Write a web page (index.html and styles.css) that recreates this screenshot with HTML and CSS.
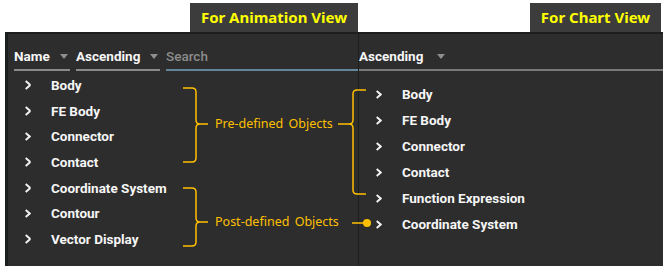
FILE: index.html
```html
<!DOCTYPE html>
<html lang="en">
  <head>
    <meta charset="UTF-8" />
    <meta name="viewport" content="width=device-width, initial-scale=1.0" />
    <link rel="stylesheet" href="styles.css">
    <title>Object Tree Views</title>
  </head>
  <body>
    <div class="page">
      <div class="tags">
        <div class="tag tag-anim">For Animation View</div>
        <div class="tag tag-chart">For Chart View</div>
      </div>

      <div class="panels">
        <!-- animation view -->
        <div class="panel panel-anim">
          <div class="toolbar">
            <div class="sel sel-name"><span>Name</span><i class="caret"></i></div>
            <div class="sel sel-order"><span>Ascending</span><i class="caret"></i></div>
            <div class="search">Search</div>
          </div>
          <ul class="tree">
            <li><i class="chev"></i>Body</li>
            <li><i class="chev"></i>FE Body</li>
            <li><i class="chev"></i>Connector</li>
            <li><i class="chev"></i>Contact</li>
            <li><i class="chev"></i>Coordinate System</li>
            <li><i class="chev"></i>Contour</li>
            <li><i class="chev"></i>Vector Display</li>
          </ul>
        </div>

        <!-- chart view -->
        <div class="panel panel-chart">
          <div class="toolbar">
            <div class="sel sel-wide"><span>Ascending</span><i class="caret"></i></div>
          </div>
          <ul class="tree">
            <li><i class="chev"></i>Body</li>
            <li><i class="chev"></i>FE Body</li>
            <li><i class="chev"></i>Connector</li>
            <li><i class="chev"></i>Contact</li>
            <li><i class="chev"></i>Function Expression</li>
            <li><i class="chev"></i>Coordinate System</li>
          </ul>
        </div>
      </div>

      <!-- annotation overlay -->
      <div class="notes">
        <svg class="braces" width="672" height="270" viewBox="0 0 672 270">
          <path d="M183 88 H192 Q196 88 196 92 V120 Q196 124 200 124 H208 M200 124 Q196 124 196 128 V158 Q196 162 192 162 H183" />
          <path d="M183 188 H192 Q196 188 196 192 V218 Q196 222 200 222 H208 M200 222 Q196 222 196 226 V242 Q196 246 192 246 H183" />
          <path d="M366 90 H357 Q353 90 353 94 V120 Q353 124 349 124 H338 M349 124 Q353 124 353 128 V190 Q353 194 357 194 H366" />
          <path d="M352 223 H367" />
          <circle cx="367" cy="223" r="4" />
        </svg>
        <span class="note note-pre">Pre-defined Objects</span>
        <span class="note note-post">Post-defined Objects</span>
      </div>
    </div>
  </body>
</html>
```

FILE: styles.css
```css
body {
  margin: 0;
  background: #ffffff;
}
.page {
  position: relative;
  width: 672px;
  height: 270px;
}
.tags {
  display: flex;
  gap: 172px;
  height: 32px;
  padding-left: 190px;
  box-sizing: border-box;
  align-items: flex-end;
}
.tag {
  height: 29px;
  background: #3c3c3c;
  color: #ffff00;
  font-family: "Noto Sans", "Open Sans", sans-serif;
  font-weight: bold;
  font-size: 15px;
  line-height: 29px;
  text-align: center;
}
.tag-anim {
  width: 168px;
}
.tag-chart {
  width: 131px;
}
.panels {
  display: flex;
  margin-left: 5px;
  height: 234px;
}
.panel {
  background: #2d2d2d;
  border-top: 2px solid #1e1e1e;
  box-sizing: border-box;
  font-family: Roboto, "Liberation Sans", sans-serif;
  font-weight: bold;
  font-size: 13.5px;
  color: #f6f6f6;
}
.panel-anim {
  width: 353px;
  border-left: 3px solid #1a211d;
}
.panel-chart {
  width: 305px;
  border-left: 1px solid #1b1f1c;
}
.toolbar {
  display: flex;
  gap: 6px;
  padding-top: 13px;
}
.panel-anim .toolbar {
  padding-left: 6px;
}
.sel {
  display: flex;
  align-items: center;
  justify-content: space-between;
  height: 18px;
  padding-bottom: 4px;
  border-bottom: 2px solid #8a8a8a;
}
.sel-name {
  width: 56px;
}
.sel-order {
  width: 84px;
}
.sel-wide {
  flex: 1;
  justify-content: flex-start;
  border-bottom-color: #7a7a7a;
}
.sel-wide .caret {
  margin-left: 14px;
}
.caret {
  width: 0;
  height: 0;
  margin-right: 2px;
  border-left: 4px solid transparent;
  border-right: 4px solid transparent;
  border-top: 5px solid #8e8e8e;
}
.search {
  flex: 1;
  height: 18px;
  line-height: 18px;
  padding-bottom: 4px;
  border-bottom: 2px solid #64869a;
  color: #8c8c8c;
  font-weight: 500;
}
.tree {
  list-style: none;
  margin: 0;
  padding: 1px 0 0 17px;
}
.panel-chart .tree {
  padding-top: 10px;
}
.tree li {
  display: flex;
  align-items: center;
  height: 25.7px;
}
.panel-chart .tree li {
  height: 26px;
}
.chev {
  width: 6px;
  height: 9px;
  margin-right: 20px;
  position: relative;
}
.chev::before,
.chev::after {
  content: "";
  position: absolute;
  left: 0;
  width: 6px;
  height: 2px;
  background: #f2f2f2;
}
.chev::before {
  top: 2px;
  transform: rotate(40deg);
}
.chev::after {
  top: 5.5px;
  transform: rotate(-40deg);
}
.notes {
  position: absolute;
  left: 0;
  top: 0;
  width: 672px;
  height: 270px;
  pointer-events: none;
}
.braces {
  position: absolute;
  left: 0;
  top: 0;
}
.braces path {
  fill: none;
  stroke: #ffc000;
  stroke-width: 1.5;
}
.braces circle {
  fill: #ffc000;
}
.note {
  position: absolute;
  left: 215px;
  color: #ffc000;
  font-family: "Noto Sans", "Open Sans", sans-serif;
  font-size: 12.5px;
  line-height: 16px;
  word-spacing: 2px;
}
.note-pre {
  top: 116px;
}
.note-post {
  top: 214px;
}
```
